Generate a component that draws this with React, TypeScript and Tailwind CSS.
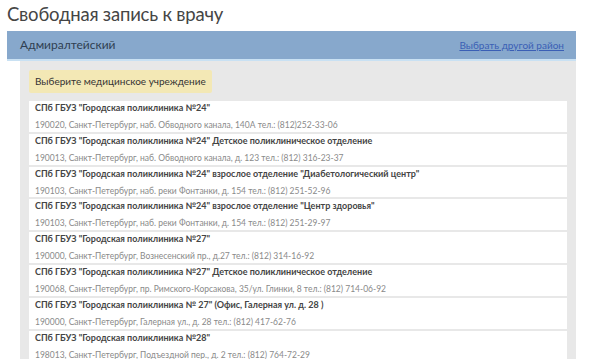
import React from 'react';

const clinics = [
  {
    name: 'СПб ГБУЗ "Городская поликлиника №24"',
    address: '190020, Санкт-Петербург, наб. Обводного канала, 140А тел.: (812)252-33-06',
  },
  {
    name: 'СПб ГБУЗ "Городская поликлиника №24" Детское поликлиническое отделение',
    address: '190013, Санкт-Петербург, наб. Обводного канала, д. 123 тел.: (812) 316-23-37',
  },
  {
    name: 'СПб ГБУЗ "Городская поликлиника №24" взрослое отделение "Диабетологический центр"',
    address: '190103, Санкт-Петербург, наб. реки Фонтанки, д. 154 тел.: (812) 251-52-96',
  },
  {
    name: 'СПб ГБУЗ "Городская поликлиника №24" взрослое отделение "Центр здоровья"',
    address: '190103, Санкт-Петербург, наб. реки Фонтанки, д. 154 тел.: (812) 251-29-97',
  },
  {
    name: 'СПб ГБУЗ "Городская поликлиника №27"',
    address: '190000, Санкт-Петербург, Вознесенский пр., д.27 тел.: (812) 314-16-92',
  },
  {
    name: 'СПб ГБУЗ "Городская поликлиника №27" Детское поликлиническое отделение',
    address: '190068, Санкт-Петербург, пр. Римского-Корсакова, 35/ул. Глинки, 8 тел.: (812) 714-06-92',
  },
  {
    name: 'СПб ГБУЗ "Городская поликлиника № 27" (Офис, Галерная ул. д. 28 )',
    address: '190000, Санкт-Петербург, Галерная ул., д. 28 тел.: (812) 417-62-76',
  },
  {
    name: 'СПб ГБУЗ "Городская поликлиника №28"',
    address: '198013, Санкт-Петербург, Подъездной пер., д. 2 тел.: (812) 764-72-29',
  },
];

const ClinicRow = ({ name, address }: { name: string; address: string }) => (
  <div className="h-[30.8px] bg-white px-[6px] leading-[14px]">
    <div className="text-[9px] font-bold text-[#444]">{name}</div>
    <div className="mt-[3px] text-[8.5px] text-[#8a8a8a]">{address}</div>
  </div>
);

export default function App() {
  return (
    <div className="h-[359px] w-[600px] overflow-hidden bg-white font-['Lato',sans-serif]">
      <h1 className="h-[31px] pl-[7px] pt-[1px] text-[18.5px] leading-[26px] tracking-[-0.2px] text-[#454545]">
        Свободная запись к врачу
      </h1>
      <div className="ml-[7px] w-[569px]">
        <div className="flex h-[30px] items-center justify-between border-b-2 border-[#c9e1f3] bg-[#87a8cc] pl-[13px] pr-[12px]">
          <span className="text-[12px] text-[#2f3f52]">Адмиралтейский</span>
          <a href="#" className="text-[10px] text-[#3a5fb5] underline">
            Выбрать другой район
          </a>
        </div>
        <div className="ml-[13px] bg-[#e8e8e8] pl-[9px] pr-[9px] pt-[6px]">
          <div className="inline-block rounded-[2px] bg-[#f3e8b5] px-[6px] py-[5px] text-[10px] leading-[13px] text-[#333]">
            Выберите медицинское учреждение
          </div>
          <div className="mt-[8px] flex flex-col gap-[2px]">
            {clinics.map((c) => (
              <ClinicRow key={c.address} name={c.name} address={c.address} />
            ))}
          </div>
        </div>
      </div>
    </div>
  );
}
